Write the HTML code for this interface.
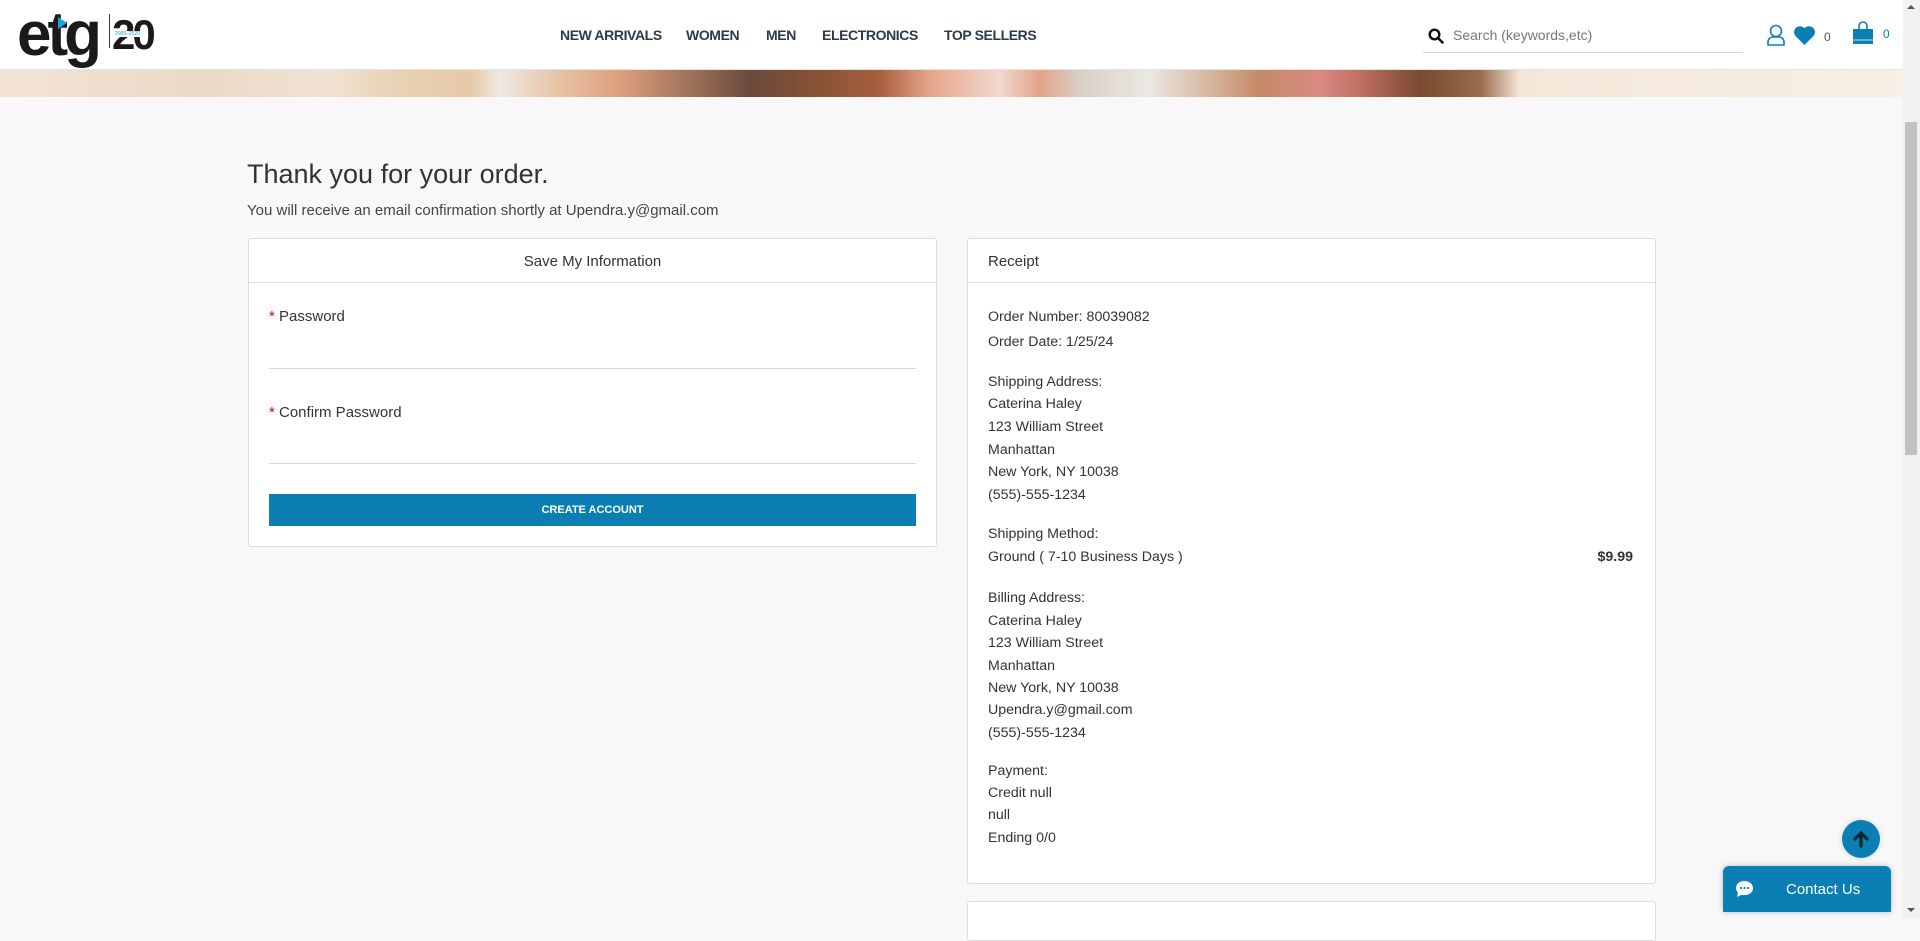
<!DOCTYPE html>
<html><head><meta charset="utf-8"><style>
*{box-sizing:border-box;margin:0;padding:0}
body{width:1920px;height:919px;overflow:hidden;background:#f8f8f8;font-family:"Liberation Sans",sans-serif;color:#333;position:relative}
.hdr{position:absolute;left:0;top:0;width:1903px;height:70px;background:#fff;border-bottom:1px solid #e2e2e2}
.banner{position:absolute;left:0;top:70px;width:1903px;height:27px;background:linear-gradient(90deg,#f3e4d6 0,#ecd9c6 200px,#f0e2d4 330px,#e9d3b5 390px,#e6c9a8 470px,#efe8e2 500px,#e7c2a4 560px,#dca07c 620px,#6a4a3c 750px,#8a5236 820px,#a8603e 880px,#e6a68a 930px,#f2d8cf 1000px,#e2a488 1040px,#d8d0c6 1080px,#ebe8e3 1150px,#c58a66 1260px,#d98a82 1320px,#c07060 1360px,#7a4a30 1420px,#9a6a4c 1480px,#f4e7da 1520px,#f8efe5 1903px)}
.nav{position:absolute;top:27px;font-size:14px;font-weight:bold;color:#2d3a4a;letter-spacing:-0.4px}
.sb{position:absolute;left:1903px;top:0;width:17px;height:919px;background:#f1f1f1}
.thumb{position:absolute;left:1905px;top:122px;width:12px;height:333px;background:#c1c1c1}
.card{position:absolute;background:#fff;border:1px solid #dcdcdc;border-radius:3px}
.card .h{height:44px;border-bottom:1px solid #dcdcdc;font-size:15px;line-height:46px}
.lbl{position:absolute;left:20px;font-size:15px}
.lbl b{color:#c00;font-weight:normal}
.ul{position:absolute;left:20px;right:20px;height:1px;background:#d8d8d8}
.btn{position:absolute;left:20px;right:20px;top:255px;height:32px;background:#0b7fb3;color:#fff;font-size:11px;text-align:center;line-height:33px;font-weight:bold}
.r{position:absolute;left:20px;font-size:14.2px;color:#333;white-space:nowrap;margin-top:1px}
</style></head><body>
<div class="hdr"></div>
<div style="position:absolute;left:17px;top:2px;font-size:62px;font-weight:bold;color:#1a1a1a;letter-spacing:-4px;line-height:66px">etg</div>
<div style="position:absolute;left:58px;top:17px;width:0;height:0;border-top:6px solid transparent;border-bottom:6px solid transparent;border-left:9px solid #1aa3e0"></div>
<div style="position:absolute;left:109px;top:14px;width:1px;height:34px;background:#333"></div>
<div style="position:absolute;left:112px;top:10px;font-size:42px;font-weight:bold;color:#1a1a1a;letter-spacing:-3px;line-height:50px">20</div>
<div style="position:absolute;left:115px;top:31px;font-size:5px;color:#1aa3e0;background:#fff">2000–2020</div>
<div class="nav" style="left:560px">NEW ARRIVALS</div>
<div class="nav" style="left:686px">WOMEN</div>
<div class="nav" style="left:766px">MEN</div>
<div class="nav" style="left:822px">ELECTRONICS</div>
<div class="nav" style="left:944px">TOP SELLERS</div>
<svg style="position:absolute;left:1428px;top:28px" width="16" height="16" viewBox="0 0 16 16"><circle cx="6.5" cy="6.5" r="4.8" fill="none" stroke="#111" stroke-width="2.4"/><path d="M10 10l4.5 4.5" stroke="#111" stroke-width="2.6" stroke-linecap="round"/></svg>
<div style="position:absolute;left:1453px;top:27px;font-size:14px;color:#777">Search (keywords,etc)</div>
<div style="position:absolute;left:1423px;top:52px;width:320px;height:1px;background:#d8d8d8"></div>
<svg style="position:absolute;left:1766px;top:24px" width="20" height="22" viewBox="0 0 20 22"><circle cx="10" cy="7" r="5.5" fill="none" stroke="#0b7fb3" stroke-width="1.6"/><path d="M2 21v-3a5 5 0 0 1 5-5h6a5 5 0 0 1 5 5v3z" fill="none" stroke="#0b7fb3" stroke-width="1.6"/></svg>
<svg style="position:absolute;left:1793px;top:25px" width="23" height="20" viewBox="0 0 24 21"><path d="M12 21L2.5 11.5A6 6 0 0 1 12 3.5a6 6 0 0 1 9.5 8z" fill="#0b7fb3"/></svg>
<div style="position:absolute;left:1824px;top:30px;font-size:12px;color:#555">0</div>
<svg style="position:absolute;left:1852px;top:21px" width="22" height="23" viewBox="0 0 22 23"><path d="M7 9V5a4 4 0 0 1 8 0v4" fill="none" stroke="#0b7fb3" stroke-width="1.6"/><path d="M1 8h20v15H1z" fill="#0b7fb3"/><path d="M1 19h20" stroke="#fff" stroke-width="0.8"/></svg>
<div style="position:absolute;left:1883px;top:27px;font-size:12px;color:#0b7fb3">0</div>
<div class="banner"></div>
<div style="position:absolute;left:247px;top:159px;font-size:27px;color:#333">Thank you for your order.</div>
<div style="position:absolute;left:247px;top:202px;font-size:15px;color:#444">You will receive an email confirmation shortly at Upendra.y@gmail.com</div>
<div class="card" style="left:248px;top:238px;width:689px;height:309px">
<div class="h" style="text-align:center">Save My Information</div>
<div class="lbl" style="top:69px"><b>*</b> Password</div>
<div class="ul" style="top:129px"></div>
<div class="lbl" style="top:165px"><b>*</b> Confirm Password</div>
<div class="ul" style="top:224px"></div>
<div class="btn">CREATE ACCOUNT</div>
</div>
<div class="card" style="left:967px;top:238px;width:689px;height:646px">
<div class="h" style="padding-left:20px">Receipt</div>
<div class="r" style="top:69px">Order Number: 80039082</div>
<div class="r" style="top:94px">Order Date: 1/25/24</div>
<div class="r" style="top:134px">Shipping Address:</div>
<div class="r" style="top:156px">Caterina Haley</div>
<div class="r" style="top:179px">123 William Street</div>
<div class="r" style="top:202px">Manhattan</div>
<div class="r" style="top:224px">New York, NY 10038</div>
<div class="r" style="top:247px">(555)-555-1234</div>
<div class="r" style="top:286px">Shipping Method:</div>
<div class="r" style="top:309px">Ground ( 7-10 Business Days )</div>
<div class="r" style="top:309px;left:auto;right:22px;font-weight:bold">$9.99</div>
<div class="r" style="top:350px">Billing Address:</div>
<div class="r" style="top:373px">Caterina Haley</div>
<div class="r" style="top:395px">123 William Street</div>
<div class="r" style="top:418px">Manhattan</div>
<div class="r" style="top:440px">New York, NY 10038</div>
<div class="r" style="top:462px">Upendra.y@gmail.com</div>
<div class="r" style="top:485px">(555)-555-1234</div>
<div class="r" style="top:523px">Payment:</div>
<div class="r" style="top:545px">Credit null</div>
<div class="r" style="top:567px">null</div>
<div class="r" style="top:590px">Ending 0/0</div>
</div>
<div class="card" style="left:967px;top:901px;width:689px;height:40px"></div>
<div style="position:absolute;left:1842px;top:820px;width:38px;height:38px;border-radius:50%;background:#0b7fb3;box-shadow:0 0 3px 2px #e6e6e6"></div>
<svg style="position:absolute;left:1852px;top:830px" width="18" height="18" viewBox="0 0 18 18"><path d="M9 16V3M3 9l6-6 6 6" fill="none" stroke="#0d2530" stroke-width="3.2" stroke-linecap="round"/></svg>
<div style="position:absolute;left:1723px;top:866px;width:168px;height:46px;background:#0b7fb3;border-radius:6px 6px 0 0;box-shadow:0 0 6px rgba(0,0,0,.25)"></div>
<svg style="position:absolute;left:1735px;top:880px" width="19" height="18" viewBox="0 0 19 18"><path d="M9.5 1C4.5 1 1 4 1 8c0 1.8.8 3.4 2 4.6L2 17l4.5-2.3c.9.3 1.9.4 3 .4 5 0 8.5-3 8.5-7s-3.5-7-8.5-7z" fill="#fff"/><circle cx="6" cy="8" r="1.1" fill="#0b7fb3"/><circle cx="9.5" cy="8" r="1.1" fill="#0b7fb3"/><circle cx="13" cy="8" r="1.1" fill="#0b7fb3"/></svg>
<div style="position:absolute;left:1786px;top:881px;font-size:15px;color:#fff">Contact Us</div>
<div class="sb"></div><div class="thumb"></div>
<div style="position:absolute;left:1907px;top:5px;border-left:4px solid transparent;border-right:4px solid transparent;border-bottom:4px solid #555"></div>
<div style="position:absolute;left:1907px;top:908px;border-left:4px solid transparent;border-right:4px solid transparent;border-top:4px solid #555"></div>
</body></html>
